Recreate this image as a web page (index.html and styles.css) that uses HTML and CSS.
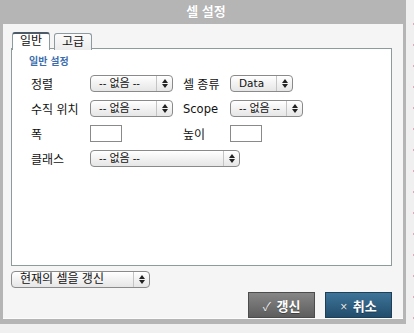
FILE: index.html
```html
<!DOCTYPE html>
<html lang="ko">
  <head>
    <meta charset="UTF-8" />
    <meta name="viewport" content="width=device-width, initial-scale=1.0" />
    <title>셀 설정</title>
    <link rel="stylesheet" href="styles.css">
  </head>
  <body>
    <div class="dialog">
      <div class="dialog-title">셀 설정</div>
      <div class="dialog-body">
        <!-- tabs -->
        <div class="tabs">
          <div class="tab active">일반</div>
          <div class="tab">고급</div>
        </div>
        <div class="tab-panel">
          <h4 class="group-title">일반 설정</h4>
          <div class="form-grid">
            <span class="label">정렬</span>
            <div class="select sel-align">
              <span class="select-text">-- 없음 --</span>
              <span class="select-arrow"></span>
            </div>
            <span class="label">셀 종류</span>
            <div class="select sel-type">
              <span class="select-text latin">Data</span>
              <span class="select-arrow"></span>
            </div>

            <span class="label">수직 위치</span>
            <div class="select sel-align">
              <span class="select-text">-- 없음 --</span>
              <span class="select-arrow"></span>
            </div>
            <span class="label latin">Scope</span>
            <div class="select sel-scope">
              <span class="select-text">-- 없음 --</span>
              <span class="select-arrow"></span>
            </div>

            <span class="label">폭</span>
            <div><input class="text-input" type="text" /></div>
            <span class="label">높이</span>
            <div><input class="text-input" type="text" /></div>

            <span class="label">클래스</span>
            <div class="select sel-class">
              <span class="select-text">-- 없음 --</span>
              <span class="select-arrow"></span>
            </div>
          </div>
        </div>
        <!-- footer -->
        <div class="select sel-update">
          <span class="select-text">현재의 셀을 갱신</span>
          <span class="select-arrow"></span>
        </div>
        <div class="buttons">
          <button class="btn btn-ok"><span class="btn-icon">&#10003;</span> 갱신</button>
          <button class="btn btn-cancel"><span class="btn-icon">&#215;</span> 취소</button>
        </div>
      </div>
    </div>
    <div class="page-edge"></div>
  </body>
</html>
```

FILE: styles.css
```css
* {
  margin: 0;
  padding: 0;
  box-sizing: border-box;
}

body {
  font-family: "Liberation Sans", "Noto Sans CJK KR", sans-serif;
  font-size: 12px;
  color: #111;
  background-color: #f0f0f0;
  display: flex;
  align-items: flex-start;
  height: 333px;
  overflow: hidden;
}

.dialog {
  width: 406px;
  height: 324px;
  background-color: #b5b5b5;
  padding: 0 3px 6px 3px;
  display: flex;
  flex-direction: column;
}

.dialog-title {
  height: 24px;
  line-height: 24px;
  text-align: center;
  color: #fff;
  font-weight: bold;
  font-size: 13px;
  padding-left: 6px;
  text-shadow: 0 0 1px rgba(0, 0, 0, 0.15);
}

.dialog-body {
  flex: 1;
  background-color: #f5f5f5;
  border-bottom: 1px solid #fcfcfc;
  padding: 8px 11px 0 8px;
  display: flex;
  flex-direction: column;
}

.tabs {
  display: flex;
  gap: 4px;
  padding-left: 1px;
  height: 16px;
  position: relative;
  z-index: 1;
}

.tab {
  width: 38px;
  height: 17px;
  margin-top: 1px;
  border: 1px solid #8c9ba0;
  border-bottom: none;
  border-radius: 3px 3px 0 0;
  background: linear-gradient(#fbfbfb, #ececec);
  text-align: center;
  line-height: 16px;
  font-size: 12px;
}

.tab.active {
  margin-top: 0;
  height: 18px;
  background: #fff;
  border-top: 2px solid #4d5b68;
  line-height: 15px;
}

.tab-panel {
  height: 218px;
  background-color: #fff;
  border: 1px solid #8d9b9b;
  padding: 6px 0 0 18px;
}

.group-title {
  font-size: 10px;
  font-weight: bold;
  color: #3a6cae;
  line-height: 14px;
  margin-left: -1px;
}

.form-grid {
  margin-top: 6px;
  display: grid;
  grid-template-columns: 60px 92px 48px auto;
  grid-auto-rows: 17px;
  row-gap: 8px;
  align-items: center;
}

.label {
  font-size: 12px;
  white-space: nowrap;
  margin-left: 1px;
}

.latin {
  font-family: "DejaVu Sans", "Noto Sans CJK KR", sans-serif;
  font-size: 11.5px;
}

.select {
  display: flex;
  height: 17px;
  border: 1px solid #8a8a8a;
  border-radius: 4px;
  background: linear-gradient(#ffffff, #f2f2f2 50%, #e6e6e6);
  box-shadow: inset 0 1px 0 #fff;
}

.select-text {
  flex: 1;
  font-size: 11px;
  line-height: 15px;
  padding-left: 8px;
  white-space: nowrap;
  overflow: hidden;
}

.select-text.latin {
  font-size: 10.5px;
}

.select-arrow {
  width: 16px;
  border-left: 1px solid #c4c4c4;
  position: relative;
}

.select-arrow::before,
.select-arrow::after {
  content: "";
  position: absolute;
  left: 5px;
  border-left: 3px solid transparent;
  border-right: 3px solid transparent;
}

.select-arrow::before {
  top: 3px;
  border-bottom: 4px solid #222;
}

.select-arrow::after {
  top: 8px;
  border-top: 4px solid #222;
}

.sel-align {
  width: 83px;
}

.sel-type {
  width: 63px;
}

.sel-scope {
  width: 73px;
}

.sel-class {
  grid-column: 2 / 5;
  width: 150px;
}

.text-input {
  display: block;
  width: 32px;
  height: 17px;
  border: 1px solid #8a8a8a;
  background: #fff;
}

.sel-update {
  width: 139px;
  margin-top: 5px;
}

.sel-update .select-text {
  font-size: 12px;
  padding-left: 8px;
}

.buttons {
  display: flex;
  justify-content: flex-end;
  gap: 10px;
  margin-top: 4px;
}

.btn {
  width: 67px;
  height: 26px;
  font-family: "Liberation Sans", "Noto Sans CJK KR", sans-serif;
  font-size: 13px;
  font-weight: bold;
  color: #fff;
  border: 1px solid #4c4c4c;
  text-shadow: 0 1px 0 rgba(0, 0, 0, 0.35);
}

.btn-icon {
  font-weight: normal;
  font-size: 12px;
  color: #e8e8e8;
  margin-right: 2px;
}

.btn-ok {
  background: linear-gradient(#868686, #5d5d5d);
}

.btn-cancel {
  background: linear-gradient(#3d7499, #234d6c);
  border-color: #1f3f57;
}

.page-edge {
  width: 8px;
  height: 333px;
  background-image: repeating-linear-gradient(
    to bottom,
    transparent 0 19px,
    #e6a6bd 19px 21px
  );
  background-size: 1px 100%;
  background-position: 7px 4px;
  background-repeat: no-repeat;
}
```
